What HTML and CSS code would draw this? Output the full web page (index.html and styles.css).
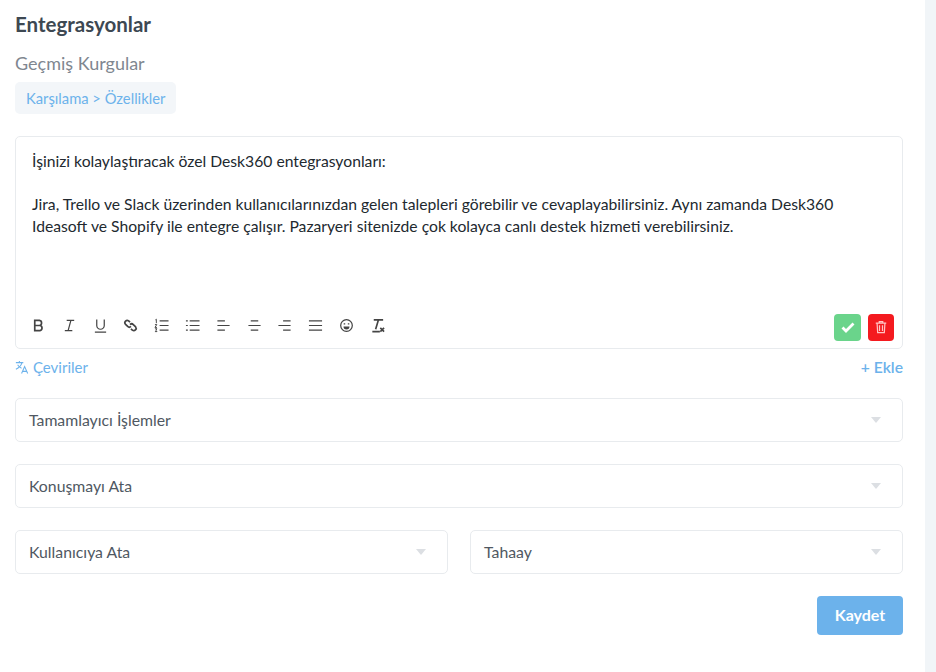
FILE: index.html
```html
<!DOCTYPE html>
<html lang="tr">
<head>
    <meta charset="UTF-8">
    <meta name="viewport" content="width=device-width, initial-scale=1.0">
    <title>Entegrasyonlar</title>
    <link rel="stylesheet" href="styles.css">
</head>
<body>
    <div class="page">
        <h1>Entegrasyonlar</h1>
        <h2>Geçmiş Kurgular</h2>
        <div class="crumb">Karşılama &gt; Özellikler</div>

        <div class="editor">
            <div class="editor-text">
                <p>İşinizi kolaylaştıracak özel Desk360 entegrasyonları:</p>
                <p>&nbsp;</p>
                <p>Jira, Trello ve Slack üzerinden kullanıcılarınızdan gelen talepleri görebilir ve cevaplayabilirsiniz. Aynı zamanda Desk360 Ideasoft ve Shopify ile entegre çalışır. Pazaryeri sitenizde çok kolayca canlı destek hizmeti verebilirsiniz.</p>
            </div>
            <div class="toolbar">
                <div class="tools">
                    <svg class="tool bold" viewBox="0 0 16 16"><path d="M4 2.500h5a2.800 2.800 0 0 1 0 5.500H4zM4 8h5.500a2.800 2.800 0 0 1 0 5.500H4z"/></svg>
                    <svg class="tool" viewBox="0 0 16 16"><path d="M5 2.500h8M3 13.500h8M9.500 2.500l-3 11"/></svg>
                    <svg class="tool" viewBox="0 0 16 16"><path d="M4 1.500V8a4 4 0 0 0 8 0V1.500M2 15h12"/></svg>
                    <svg class="tool bold" viewBox="0 0 16 16"><path d="M7.500 4.500 6 3a2.500 2.500 0 0 0-3.500 3.500L5 9a2.500 2.500 0 0 0 3.500 0M7.500 7a2.500 2.500 0 0 1 3.500 0l2.500 2.500a2.500 2.500 0 0 1-3.500 3.500L8.500 11.500"/></svg>
                    <svg class="tool" viewBox="0 0 16 16"><path d="M6 3h9.500M6 8h9.500M6 13h9.500"/><path class="thin" d="M1.500 2 2.500 1.300V5.500M1 7h2L1 10h2.200M1 11.500h2.200L2 13l1.200 1.500H1"/></svg>
                    <svg class="tool" viewBox="0 0 16 16"><path d="M5 3h10.500M5 8h10.500M5 13h10.500M1 3h2M1 8h2M1 13h2"/></svg>
                    <svg class="tool" viewBox="0 0 16 16"><path d="M1.500 3h8M1.500 8h13M1.500 13h8"/></svg>
                    <svg class="tool" viewBox="0 0 16 16"><path d="M4 3h8M1.500 8h13M4 13h8"/></svg>
                    <svg class="tool" viewBox="0 0 16 16"><path d="M6.500 3h8M1.500 8h13M6.500 13h8"/></svg>
                    <svg class="tool" viewBox="0 0 16 16"><path d="M1 3h14M1 8h14M1 13h14"/></svg>
                    <svg class="tool" viewBox="0 0 16 16"><circle cx="8" cy="8" r="6.200"/><path d="M5 6.300h1.600M9.400 6.300H11"/><path class="solid" d="M4.800 9h6.400a3.200 3.200 0 0 1-6.400 0z"/></svg>
                    <svg class="tool bold" viewBox="0 0 16 16"><path d="M4 2h10M9 2 6 12M2.500 14.500h8M11 10.500l4 4M15 10.500l-4 4"/></svg>
                </div>
                <div class="actions">
                    <button class="icon-btn ok">
                        <svg viewBox="0 0 16 16"><path d="M2.500 8.500 6 12l7.500-7.500"/></svg>
                    </button>
                    <button class="icon-btn del">
                        <svg viewBox="0 0 16 16"><path d="M2 3.500h12M6 3.500V1.800h4v1.700M3.500 3.500l.7 11h7.600l.7-11M6.300 6v6.500M9.700 6v6.500"/></svg>
                    </button>
                </div>
            </div>
        </div>

        <div class="translate-row">
            <a class="link translate">
                <svg viewBox="0 0 16 16"><path d="M1 3h8.500M5 1v2M8 3C7 6.500 4.500 9 1 10.500M3 5.500c1 1.800 2.700 3.200 4.500 4M7.500 15.500l3.500-8 3.500 8M8.700 13h4.600"/></svg>
                Çeviriler
            </a>
            <a class="link add">+ Ekle</a>
        </div>

        <div class="select"><span>Tamamlayıcı İşlemler</span><i class="caret"></i></div>
        <div class="select"><span>Konuşmayı Ata</span><i class="caret"></i></div>
        <div class="select-row">
            <div class="select"><span>Kullanıcıya Ata</span><i class="caret"></i></div>
            <div class="select"><span>Tahaay</span><i class="caret"></i></div>
        </div>

        <div class="footer">
            <button class="save">Kaydet</button>
        </div>
    </div>
</body>
</html>
```

FILE: styles.css
```css
body {
    margin: 0;
    background-color: #f1f5f8;
    font-family: "Lato", "Noto Sans", sans-serif;
    color: #3d4852;
}

.page {
    width: 925px;
    height: 672px;
    box-sizing: border-box;
    padding: 12px 22px 0 15px;
    background: #fff;
}

h1 {
    margin: 0;
    font-size: 20.500px;
    line-height: 25px;
    font-weight: 700;
}

h2 {
    margin: 15px 0 0;
    font-size: 18px;
    line-height: 22px;
    font-weight: 400;
    color: #7f8790;
}

.crumb {
    display: inline-block;
    margin-top: 8px;
    padding: 0 11px;
    height: 32px;
    line-height: 32px;
    font-size: 14.750px;
    color: #6cb2eb;
    background-color: #f3f6f9;
    border-radius: 5px;
}

.editor {
    margin-top: 22px;
    height: 213px;
    box-sizing: border-box;
    border: 1px solid #e8ebee;
    border-radius: 5px;
    padding: 14.400px 16px 0;
    display: flex;
    flex-direction: column;
    justify-content: space-between;
}

.editor-text {
    font-size: 15.700px;
    line-height: 21.500px;
    color: #22292f;
}

.editor-text p {
    margin: 0;
}

.toolbar {
    display: flex;
    justify-content: space-between;
    align-items: center;
    height: 28px;
    margin: 0 -8px 7px 0;
}

.tools {
    display: flex;
    gap: 15.800px;
    margin: 0 0 4px -1px;
}

.tool {
    width: 15px;
    height: 15px;
    fill: none;
    stroke: #444;
    stroke-width: 1.300;
}

.tool.bold {
    stroke-width: 1.800;
}

.tool .solid {
    fill: #444;
    stroke: none;
}

.tool .thin {
    stroke-width: 1;
}

.actions {
    display: flex;
    gap: 7px;
}

.icon-btn {
    width: 27px;
    height: 27px;
    padding: 0;
    border: none;
    border-radius: 4px;
    display: flex;
    align-items: center;
    justify-content: center;
}

.icon-btn svg {
    fill: none;
}

.ok {
    background-color: #6ad48b;
}

.ok svg {
    width: 16px;
    height: 16px;
    stroke: #fff;
    stroke-width: 2.800;
}

.del {
    width: 26px;
    background-color: #f41a1f;
}

.del svg {
    width: 14px;
    height: 14px;
    stroke: #ffc4c4;
    stroke-width: 1.400;
}

.translate-row {
    display: flex;
    justify-content: space-between;
    align-items: center;
    margin-top: 7px;
    height: 22px;
    font-size: 15px;
    color: #6cb2eb;
}

.translate {
    display: flex;
    align-items: center;
    gap: 4px;
}

.translate svg {
    width: 14px;
    height: 14px;
    fill: none;
    stroke: #6cb2eb;
    stroke-width: 1.200;
}

.add {
    font-size: 15.700px;
    font-weight: 600;
}

.select {
    display: flex;
    align-items: center;
    justify-content: space-between;
    height: 44px;
    box-sizing: border-box;
    padding: 0 21px 0 13px;
    margin-top: 22px;
    border: 1px solid #e8ebee;
    border-radius: 5px;
    font-size: 15.800px;
    color: #4f5862;
}

.select span {
    margin-bottom: 2px;
}

.translate-row + .select {
    margin-top: 20px;
}

.caret {
    width: 0;
    height: 0;
    border-left: 5.500px solid transparent;
    border-right: 5.500px solid transparent;
    border-top: 6px solid #dcdfe3;
}

.select-row {
    display: grid;
    grid-template-columns: 1fr 1fr;
    gap: 22px;
}

.footer {
    display: flex;
    justify-content: flex-end;
    margin-top: 22px;
}

.save {
    width: 86px;
    height: 39px;
    padding: 0 0 2px;
    border: none;
    border-radius: 4px;
    background-color: #6cb2eb;
    color: #fff;
    font-family: inherit;
    font-size: 16px;
    font-weight: 700;
}
```
